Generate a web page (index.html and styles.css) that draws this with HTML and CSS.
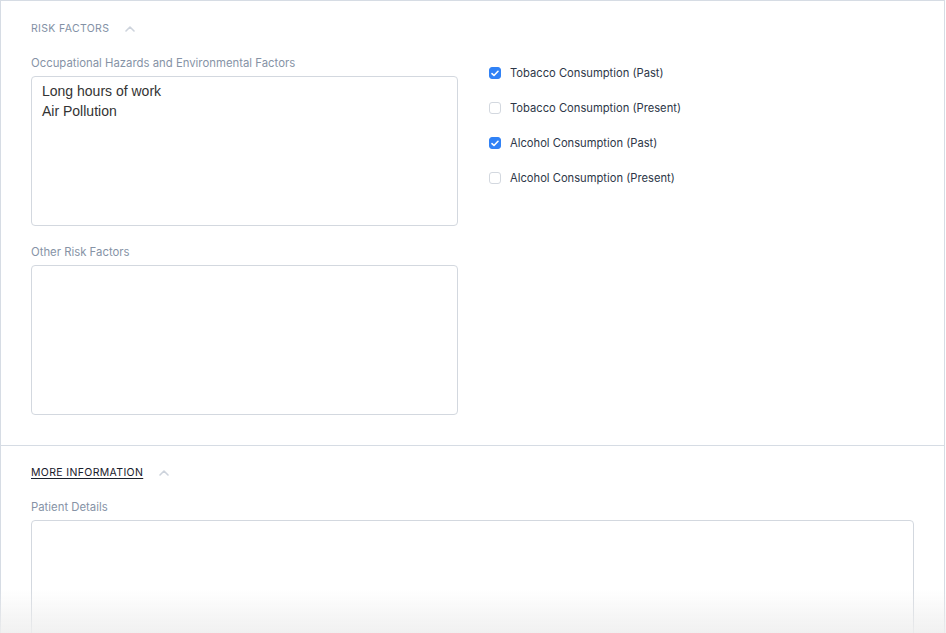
FILE: index.html
```html
<!DOCTYPE html>
<html>
<head>
<meta charset="utf-8">
<link rel="stylesheet" href="styles.css">
</head>
<body>
<div class="page">
  <section class="section">
    <div class="section-head">
      <span class="section-title">Risk Factors</span>
      <svg class="chev" width="10" height="6" viewBox="0 0 10 6"><path d="M1 5 L5 1 L9 5" fill="none" stroke="#cdd3dc" stroke-width="1.6" stroke-linecap="round" stroke-linejoin="round"/></svg>
    </div>
    <div class="grid">
      <div class="col">
        <label class="field-label">Occupational Hazards and Environmental Factors</label>
        <div class="textarea">Long hours of work<br>Air Pollution</div>
        <label class="field-label second">Other Risk Factors</label>
        <div class="textarea"></div>
      </div>
      <div class="col">
        <ul class="checks">
          <li class="check"><span class="box on"><svg width="8" height="7" viewBox="0 0 8 7"><path d="M1 3.6 L3 5.5 L7 1.3" fill="none" stroke="#fff" stroke-width="1.6" stroke-linecap="round" stroke-linejoin="round"/></svg></span>Tobacco Consumption (Past)</li>
          <li class="check"><span class="box"></span>Tobacco Consumption (Present)</li>
          <li class="check"><span class="box on"><svg width="8" height="7" viewBox="0 0 8 7"><path d="M1 3.6 L3 5.5 L7 1.3" fill="none" stroke="#fff" stroke-width="1.6" stroke-linecap="round" stroke-linejoin="round"/></svg></span>Alcohol Consumption (Past)</li>
          <li class="check"><span class="box"></span>Alcohol Consumption (Present)</li>
        </ul>
      </div>
    </div>
  </section>
  <section class="section two">
    <div class="section-head">
      <span class="section-title dark">More Information</span>
      <svg class="chev" width="10" height="6" viewBox="0 0 10 6"><path d="M1 5 L5 1 L9 5" fill="none" stroke="#cdd3dc" stroke-width="1.6" stroke-linecap="round" stroke-linejoin="round"/></svg>
    </div>
    <label class="field-label">Patient Details</label>
    <div class="textarea tall"></div>
  </section>
</div>
<div class="fade"></div>
</body>
</html>
```

FILE: styles.css
```css
html, body {
  margin: 0;
  padding: 0;
  background: #fff;
  overflow: hidden;
  height: 633px;
}
body {
  font-family: Inter, "Noto Sans", sans-serif;
  color: #2d3748;
}
.page {
  width: 943px;
  border: 1px solid #d6dce4;
  border-bottom: none;
  height: 700px;
}
.section {
  padding: 20px 30px 30px 30px;
}
.section.two {
  border-top: 1px solid #d6dce4;
  padding-top: 19px;
}
.section-head {
  display: flex;
  align-items: center;
  gap: 16px;
  height: 16px;
}
.section-title {
  font-size: 10.5px;
  letter-spacing: 0.35px;
  text-transform: uppercase;
  color: #8391a5;
  line-height: 16px;
}
.section-title.dark {
  color: #1a202c;
  text-decoration: underline;
  text-underline-offset: 2px;
}
.chev {
  display: block;
}
.grid {
  display: grid;
  grid-template-columns: 427px 427px;
  column-gap: 31px;
  margin-top: 17px;
}
.two .field-label {
  margin-top: 17px;
}
.field-label {
  display: block;
  font-size: 11.35px;
  line-height: 16px;
  padding-top: 1px;
  color: #8693a6;
  margin-bottom: 5px;
}
.field-label.second {
  margin-top: 17px;
}
.textarea {
  box-sizing: border-box;
  height: 150px;
  border: 1px solid #d3d8df;
  border-radius: 4px;
  padding: 4px 10px;
  font-family: "Liberation Sans", Arial, sans-serif;
  font-size: 14px;
  line-height: 20px;
  color: #333;
}
.textarea.tall {
  height: 200px;
}
.checks {
  list-style: none;
  margin: 9px 0 0 0;
  padding: 0;
  display: flex;
  flex-direction: column;
  gap: 15px;
}
.check {
  display: flex;
  align-items: center;
  gap: 9px;
  height: 20px;
  font-size: 11.2px;
  color: #2d3748;
}
.box {
  box-sizing: border-box;
  width: 12px;
  height: 12px;
  border: 1px solid #d3d8df;
  border-radius: 3px;
  background: #fff;
  display: flex;
  align-items: center;
  justify-content: center;
}
.box.on {
  background: #3182f6;
  border-color: #3182f6;
}
.fade {
  position: fixed;
  left: 0;
  right: 0;
  bottom: 0;
  height: 45px;
  background: linear-gradient(to bottom, rgba(240,240,240,0), rgba(238,238,238,0.85));
  pointer-events: none;
}
```
